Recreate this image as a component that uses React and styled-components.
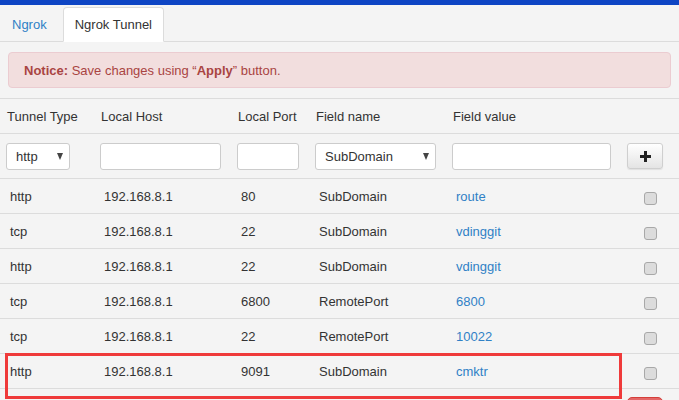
// Libs
import React from 'react';
import styled, { createGlobalStyle, css } from 'styled-components';

const GlobalStyle = createGlobalStyle`
	html, body {
		margin: 0;
		padding: 0;
		background: #f4f4f4;
	}
	body {
		font-family: "Liberation Sans", Arial, sans-serif;
		font-size: 13px;
		color: #333;
	}
	* {
		box-sizing: border-box;
	}
`;

// Styled
const Page = styled.div`
	width: 679px;
	min-height: 400px;
	background: #f4f4f4;
	overflow: hidden;
`;

const TopBar = styled.div`
	height: 5px;
	background: #0e45c4;
`;

const Tabs = styled.nav`
	display: flex;
	gap: 4px;
	padding-top: 2px;
	border-bottom: 1px solid #dcdcdc;
`;

const Tab = styled.a`
	display: flex;
	align-items: center;
	height: 35px;
	padding: 0 11px;
	margin-bottom: -1px;
	border: 1px solid transparent;
	border-radius: 4px 4px 0 0;
	color: #3081c6;
	text-decoration: none;
	cursor: pointer;

	${p => p.active && css`
		background: #fff;
		color: #333;
		border-color: #dcdcdc;
		border-bottom-color: #fff;
	`}
`;

const Notice = styled.div`
	display: flex;
	align-items: center;
	height: 36px;
	margin: 10px 8px;
	padding: 0 15px;
	background: #f2dede;
	border: 1px solid #ebccd1;
	border-radius: 4px;
	color: #a94442;

	b {
		font-weight: bold;
	}
`;

const COLS = '94px 137px 78px 137px 175px 1fr';

const Row = styled.div`
	position: relative;
	display: grid;
	grid-template-columns: ${COLS};
	align-items: center;
	height: ${p => p.h || 35}px;
	border-bottom: 1px solid #dcdcdc;

	${p => p.top && css`
		border-top: 1px solid #dcdcdc;
		height: ${(p.h || 35) + 1}px;
	`}

	${p => p.highlighted && css`
		&::after {
			content: '';
			position: absolute;
			left: 5px;
			top: -1px;
			width: 611px;
			height: 40px;
			border: 3px solid #ef3a3a;
			pointer-events: none;
		}
	`}
`;

const Cell = styled.div`
	padding-left: ${p => p.pad ?? 10}px;
	white-space: nowrap;
`;

const LinkText = styled.span`
	color: #3081c6;
`;

const Input = styled.input`
	display: block;
	width: ${p => p.w}px;
	height: 27px;
	border: 1px solid #cccccc;
	border-radius: 3px;
	background: #fff;
	font: inherit;
	padding: 0 8px;
	outline: none;
`;

const Select = styled.div`
	display: flex;
	align-items: center;
	justify-content: space-between;
	width: ${p => p.w}px;
	height: 27px;
	padding: 0 6px 0 9px;
	border: 1px solid #cccccc;
	border-radius: 3px;
	background: #fff;
	color: #333;
`;

const Arrow = styled.span`
	width: 0;
	height: 0;
	margin-top: 1px;
	border-left: 3.5px solid transparent;
	border-right: 3.5px solid transparent;
	border-top: 7px solid #444;
`;

const PlusButton = styled.button`
	display: flex;
	align-items: center;
	justify-content: center;
	width: 36px;
	height: 26px;
	padding: 0;
	border: 1px solid #cfcfcf;
	border-radius: 3px;
	background: linear-gradient(#ffffff, #e4e4e4);
	box-shadow: 0 1px 1px rgba(0, 0, 0, 0.08);
	cursor: pointer;
`;

const Check = styled.span`
	display: block;
	width: 13px;
	height: 13px;
	margin: 4px 0 0 23px;
	border: 1px solid #a8a8a8;
	border-radius: 3px;
	background: #dcdcdc;
`;

const Footer = styled.div`
	display: grid;
	grid-template-columns: ${COLS};
	padding-top: 8px;
`;

const DeleteButton = styled.button`
	grid-column: 6;
	margin-left: 6px;
	width: 36px;
	height: 26px;
	border: 1px solid #d43f3a;
	border-radius: 5px;
	background: #e46767;
`;

const PlusIcon = () => (
	<svg width="11" height="11" viewBox="0 0 11 11">
		<rect x="4" y="0" width="3" height="11" fill="#222" />
		<rect x="0" y="4" width="11" height="3" fill="#222" />
	</svg>
);

const tunnels = [
	{ type: 'http', host: '192.168.8.1', port: '80', field: 'SubDomain', value: 'route' },
	{ type: 'tcp', host: '192.168.8.1', port: '22', field: 'SubDomain', value: 'vdinggit' },
	{ type: 'http', host: '192.168.8.1', port: '22', field: 'SubDomain', value: 'vdinggit' },
	{ type: 'tcp', host: '192.168.8.1', port: '6800', field: 'RemotePort', value: '6800' },
	{ type: 'tcp', host: '192.168.8.1', port: '22', field: 'RemotePort', value: '10022' },
	{ type: 'http', host: '192.168.8.1', port: '9091', field: 'SubDomain', value: 'cmktr', marked: true },
];

export default function App() {
	return (
		<Page>
			<GlobalStyle />
			<TopBar />
			<Tabs>
				<Tab>Ngrok</Tab>
				<Tab active>Ngrok Tunnel</Tab>
			</Tabs>
			<Notice>
				<span><b>Notice:</b> Save changes using “<b>Apply</b>” button.</span>
			</Notice>

			<Row top>
				<Cell pad={7}>Tunnel Type</Cell>
				<Cell pad={7}>Local Host</Cell>
				<Cell pad={7}>Local Port</Cell>
				<Cell pad={7}>Field name</Cell>
				<Cell pad={7}>Field value</Cell>
				<Cell />
			</Row>
			<Row h={45}>
				<Cell pad={6}>
					<Select w={64}>http<Arrow /></Select>
				</Cell>
				<Cell pad={6}><Input w={121} /></Cell>
				<Cell pad={6}><Input w={62} /></Cell>
				<Cell pad={6}>
					<Select w={121}>SubDomain<Arrow /></Select>
				</Cell>
				<Cell pad={6}><Input w={159} /></Cell>
				<Cell pad={6}>
					<PlusButton><PlusIcon /></PlusButton>
				</Cell>
			</Row>
			{tunnels.map((t, i) => (
				<Row key={i} highlighted={t.marked}>
					<Cell>{t.type}</Cell>
					<Cell>{t.host}</Cell>
					<Cell>{t.port}</Cell>
					<Cell>{t.field}</Cell>
					<Cell><LinkText>{t.value}</LinkText></Cell>
					<Cell pad={0}><Check /></Cell>
				</Row>
			))}
			<Footer>
				<DeleteButton />
			</Footer>
		</Page>
	);
}
